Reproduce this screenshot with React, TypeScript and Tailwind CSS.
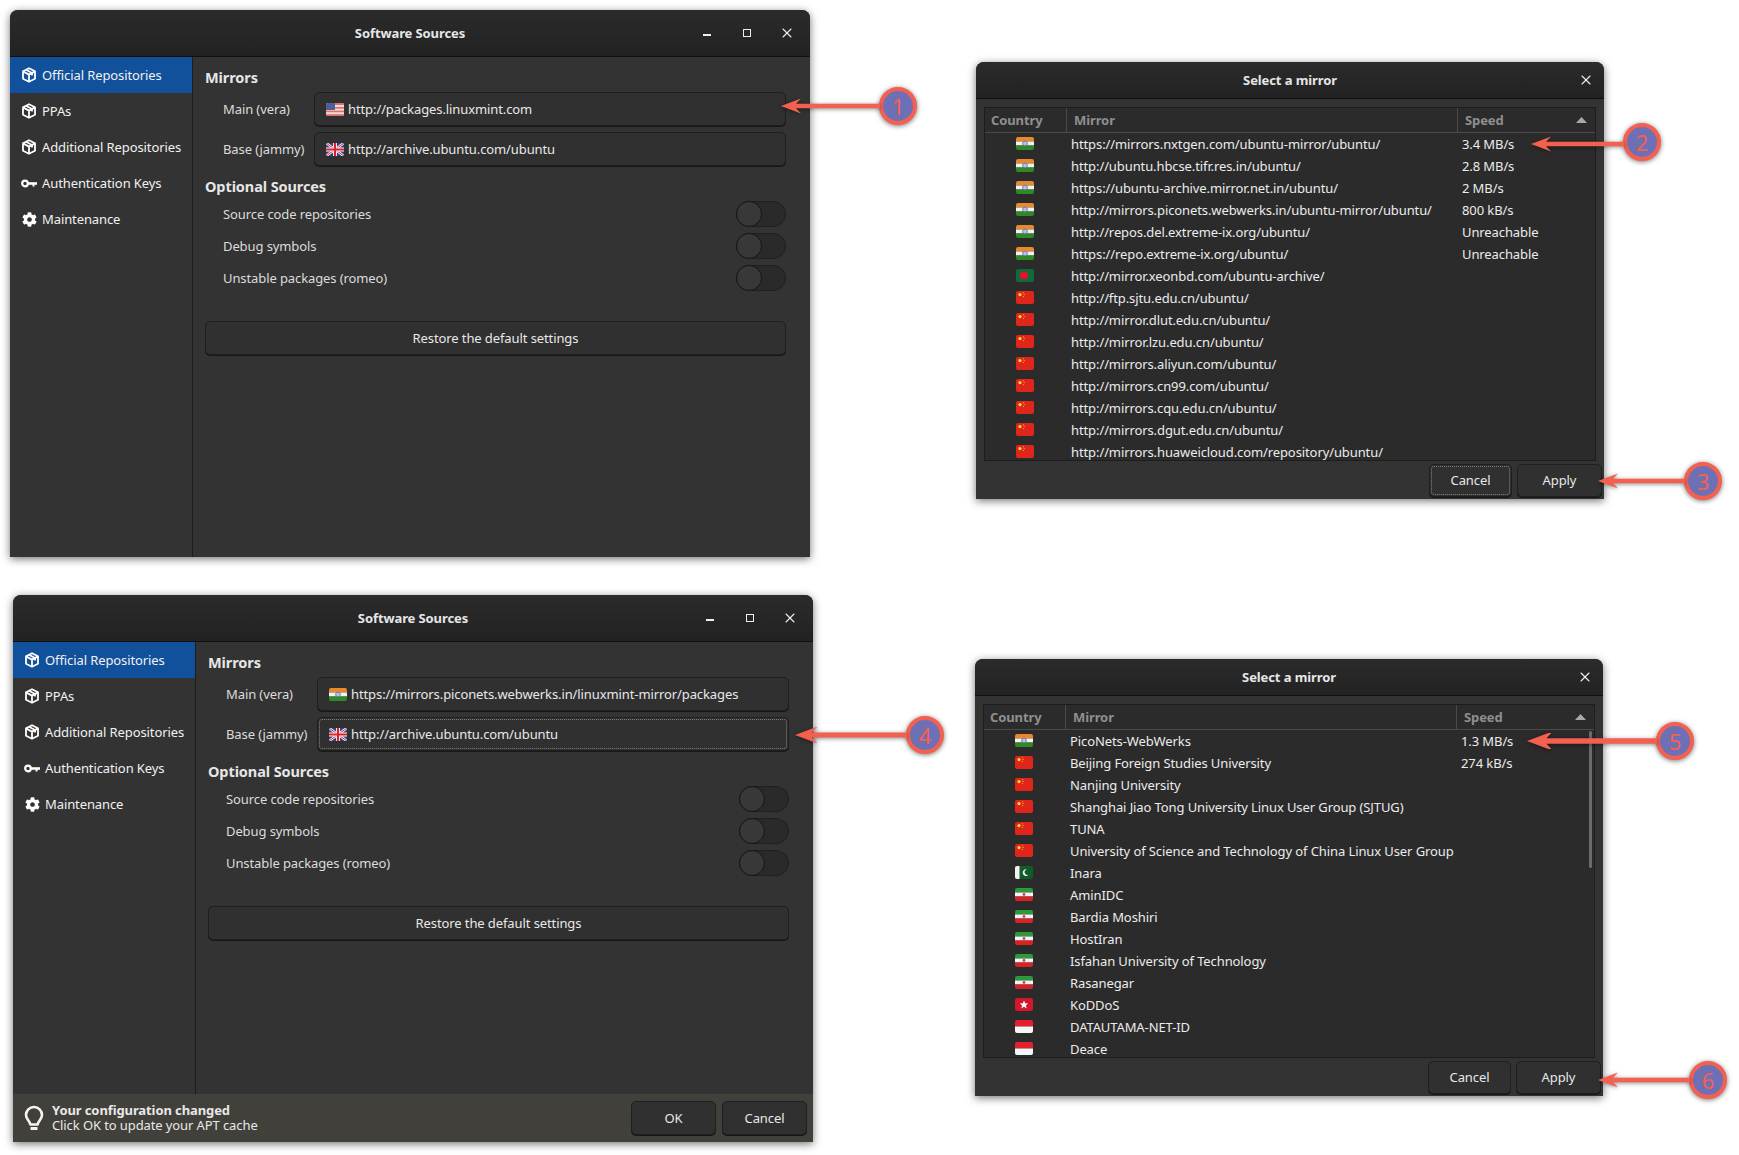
import type { ReactNode } from "react"
import { FaCog } from "react-icons/fa"
import { X } from "lucide-react"

type FlagName = "in" | "bd" | "cn" | "pk" | "ir" | "hk" | "id" | "us" | "gb"

function Flag({ name, className = "" }: { name: FlagName; className?: string }) {
    return (
        <svg viewBox="0 0 18 13" className={`w-[18px] h-[13px] rounded-[2px] shrink-0 ${className}`}>
            {name === "in" && (
                <>
                    <rect width="18" height="4.5" fill="#e88a2c" />
                    <rect y="4.5" width="18" height="4" fill="#f2f2f2" />
                    <rect y="8.5" width="18" height="4.5" fill="#2f8a25" />
                    <circle cx="9" cy="6.5" r="2.4" fill="#b9c4dc" stroke="#5566a8" strokeWidth="0.8" />
                </>
            )}
            {name === "bd" && (
                <>
                    <rect width="18" height="13" fill="#0f6a3c" />
                    <circle cx="8" cy="6.5" r="4" fill="#e5122b" />
                </>
            )}
            {name === "cn" && (
                <>
                    <rect width="18" height="13" fill="#e0261b" />
                    <circle cx="4" cy="3.6" r="1.6" fill="#f6dd3c" />
                    <circle cx="7.4" cy="1.8" r="0.5" fill="#f6dd3c" />
                    <circle cx="8.2" cy="3.6" r="0.5" fill="#f6dd3c" />
                    <circle cx="7.4" cy="5.6" r="0.5" fill="#f6dd3c" />
                </>
            )}
            {name === "pk" && (
                <>
                    <rect width="18" height="13" fill="#0f5c2a" />
                    <rect width="4.5" height="13" fill="#f2f2f2" />
                    <path d="M11.5 3.4a3.3 3.3 0 1 0 2 5.4 2.7 2.7 0 1 1-2-5.4z" fill="#f2f2f2" />
                </>
            )}
            {name === "ir" && (
                <>
                    <rect width="18" height="4.5" fill="#2c9a3c" />
                    <rect y="4.5" width="18" height="4" fill="#f4f4f4" />
                    <rect y="8.5" width="18" height="4.5" fill="#dc2027" />
                    <circle cx="9" cy="6.5" r="1.4" fill="#dc4048" />
                </>
            )}
            {name === "hk" && (
                <>
                    <rect width="18" height="13" fill="#d3162a" />
                    <path d="M9 2.4l1.2 2.8 3 .2-2.3 2 .8 3L9 8.8l-2.7 1.6.8-3-2.3-2 3-.2z" fill="#f6f6f6" />
                </>
            )}
            {name === "id" && (
                <>
                    <rect width="18" height="6.5" fill="#e5202c" />
                    <rect y="6.5" width="18" height="6.5" fill="#f6f6f6" />
                </>
            )}
            {name === "us" && (
                <>
                    <rect width="18" height="13" fill="#f2d9d6" />
                    <rect y="0" width="18" height="2" fill="#d9706e" />
                    <rect y="4" width="18" height="1.6" fill="#d9706e" />
                    <rect y="7.6" width="18" height="1.6" fill="#d9706e" />
                    <rect y="11.2" width="18" height="1.8" fill="#d9706e" />
                    <rect width="9" height="7" fill="#4c5f97" />
                </>
            )}
            {name === "gb" && (
                <>
                    <rect width="18" height="13" fill="#2b3f8f" />
                    <path d="M0 0L18 13M18 0L0 13" stroke="#f4f4f4" strokeWidth="2.6" />
                    <path d="M0 0L18 13M18 0L0 13" stroke="#d8232f" strokeWidth="1" />
                    <path d="M9 0V13M0 6.5H18" stroke="#f4f4f4" strokeWidth="4" />
                    <path d="M9 0V13M0 6.5H18" stroke="#d8232f" strokeWidth="2.2" />
                </>
            )}
        </svg>
    )
}

function PackageIcon() {
    return (
        <svg viewBox="0 0 16 16" className="size-[16px] shrink-0 text-white" fill="none" stroke="currentColor" strokeWidth="1.8" strokeLinejoin="round">
            <path d="M8 1.2 14 4.2v7.6L8 14.8 2 11.8V4.2z" />
            <path d="M2 4.4l6 3.2 6-3.2M8 7.6v7M5 2.8l6 3.2v2.6" />
        </svg>
    )
}

function KeyIcon() {
    return (
        <svg viewBox="0 0 16 9" className="w-[16px] h-[9px] shrink-0 text-white" fill="none" stroke="currentColor">
            <circle cx="4" cy="4.5" r="2.8" strokeWidth="2.2" />
            <path d="M7 4.5h9" strokeWidth="2.6" />
            <path d="M12.5 5v2.5" strokeWidth="2" />
        </svg>
    )
}

function BulbIcon() {
    return (
        <svg viewBox="0 0 20 26" className="w-[20px] h-[26px] shrink-0 text-[#f4f4f4]" fill="none" stroke="currentColor">
            <path d="M10 2a7.9 7.9 0 0 0-8 8c0 4.2 3.6 5.6 4.4 9.5h7.2C14.4 15.6 18 14.2 18 10a7.9 7.9 0 0 0-8-8z" strokeWidth="2.6" strokeLinejoin="round" />
            <path d="M6.5 23.5h7" strokeWidth="3" />
        </svg>
    )
}

function NavItem({ icon, label, active = false }: { icon: ReactNode; label: string; active?: boolean }) {
    return (
        <div className={`h-[36px] flex items-center gap-[5px] pl-[11px] text-[#f1f1f1] ${active ? "bg-[#11509b]" : ""}`}>
            <span className="w-[16px] flex justify-center">{icon}</span>
            <span className="translate-y-px">{label}</span>
        </div>
    )
}

function Switch() {
    return (
        <div className="w-[50px] h-[26px] rounded-full bg-[#2a2a2a] border border-[#1f1f1f]">
            <div className="w-[26px] h-[26px] -m-px rounded-full bg-[#383838] border border-[#161616]" />
        </div>
    )
}

function OptionRow({ label }: { label: string }) {
    return (
        <div className="h-[26px] flex items-center justify-between pl-[18px]">
            <span className="translate-y-px text-[#dcdcdc]">{label}</span>
            <Switch />
        </div>
    )
}

const fieldClass = "rounded-[5px] bg-[#303030] border border-[#1f1f1f] shadow-[0_1px_0_#171717] text-[#e8e8e8]"
const focusClass = "outline-1 outline-dotted outline-[#808080] -outline-offset-3"

function UrlRow({ label, flag, url, focused = false }: { label: string; flag: FlagName; url: string; focused?: boolean }) {
    return (
        <div className="flex items-center pl-[18px]">
            <span className="w-[91px] translate-y-px text-[#dcdcdc]">{label}</span>
            <div className={`flex-1 h-[34px] flex items-center gap-[4px] pl-[11px] ${fieldClass} ${focused ? focusClass : ""}`}>
                <Flag name={flag} />
                <span className="translate-y-px">{url}</span>
            </div>
        </div>
    )
}

function Btn({ children, className = "", focused = false }: { children: ReactNode; className?: string; focused?: boolean }) {
    return (
        <button className={`flex items-center justify-center ${fieldClass} ${focused ? focusClass : ""} ${className}`}>
            <span className="translate-y-px">{children}</span>
        </button>
    )
}

function TitleBar({ title, className, children }: { title: string; className: string; children: ReactNode }) {
    return (
        <div className={`relative shrink-0 flex items-center justify-center rounded-t-[8px] bg-gradient-to-b from-[#2b2b2b] to-[#222222] border-b border-[#101010] font-bold text-[#e6e6e6] ${className}`}>
            <span className="translate-y-px">{title}</span>
            <div className="absolute right-0 inset-y-0 flex items-center">{children}</div>
        </div>
    )
}

function SoftwareSources({
    className,
    mainFlag,
    mainUrl,
    baseFocused = false,
    changed = false,
}: {
    className: string
    mainFlag: FlagName
    mainUrl: string
    baseFocused?: boolean
    changed?: boolean
}) {
    return (
        <div className={`absolute w-[800px] h-[547px] flex flex-col bg-[#333333] rounded-t-[8px] shadow-[0_2px_9px_rgba(0,0,0,0.55)] ${className}`}>
            <TitleBar title="Software Sources" className="h-[47px]">
                <div className="flex items-center pr-[3px]">
                    <div className="w-[40px] flex justify-center">
                        <div className="w-[8px] h-[2px] translate-y-[2px] bg-[#eeeeee]" />
                    </div>
                    <div className="w-[40px] flex justify-center">
                        <div className="size-[8px] border-[1.5px] border-[#eeeeee]" />
                    </div>
                    <div className="w-[40px] flex justify-center">
                        <X className="size-[16px] text-[#eeeeee]" strokeWidth={1.6} />
                    </div>
                </div>
            </TitleBar>
            <div className="flex-1 flex min-h-0">
                <div className="w-[183px] shrink-0 border-r border-[#1d1d1d]">
                    <NavItem icon={<PackageIcon />} label="Official Repositories" active />
                    <NavItem icon={<PackageIcon />} label="PPAs" />
                    <NavItem icon={<PackageIcon />} label="Additional Repositories" />
                    <NavItem icon={<KeyIcon />} label="Authentication Keys" />
                    <NavItem icon={<FaCog className="size-[15px] text-white" />} label="Maintenance" />
                </div>
                <div className="flex-1 pl-[12px] pr-[24px] pt-[10px]">
                    <h2 className="h-[21px] flex items-center font-bold text-[#e6e6e6] text-[14.5px]">Mirrors</h2>
                    <div className="mt-[4px] flex flex-col gap-[6px]">
                        <UrlRow label="Main (vera)" flag={mainFlag} url={mainUrl} />
                        <UrlRow label="Base (jammy)" flag="gb" url="http://archive.ubuntu.com/ubuntu" focused={baseFocused} />
                    </div>
                    <h2 className="mt-[10px] h-[21px] flex items-center font-bold text-[#e6e6e6] text-[14.5px]">Optional Sources</h2>
                    <div className="mt-[4px] flex flex-col gap-[6px]">
                        <OptionRow label="Source code repositories" />
                        <OptionRow label="Debug symbols" />
                        <OptionRow label="Unstable packages (romeo)" />
                    </div>
                    <Btn className="mt-[30px] w-full h-[34px]">Restore the default settings</Btn>
                </div>
            </div>
            {changed && (
                <div className="h-[48px] shrink-0 flex items-center gap-[6px] pl-[11px] pr-[6px] bg-[#41403b]">
                    <BulbIcon />
                    <div className="ml-[2px] flex-1 leading-[15px] text-[#e8e8e8]">
                        <div className="font-bold">Your configuration changed</div>
                        <div>Click OK to update your APT cache</div>
                    </div>
                    <Btn className="w-[85px] h-[34px]">OK</Btn>
                    <Btn className="w-[85px] h-[34px]">Cancel</Btn>
                </div>
            )}
        </div>
    )
}

interface Mirror {
    flag: FlagName
    name: string
    speed?: string
}

function MirrorDialog({
    className,
    mirrors,
    scrollbar = false,
    cancelFocused = false,
}: {
    className: string
    mirrors: Mirror[]
    scrollbar?: boolean
    cancelFocused?: boolean
}) {
    return (
        <div className={`absolute w-[628px] h-[437px] flex flex-col bg-[#333333] rounded-t-[8px] shadow-[0_2px_9px_rgba(0,0,0,0.55)] ${className}`}>
            <TitleBar title="Select a mirror" className="h-[37px]">
                <X className="size-[16px] mr-[10px] text-[#eeeeee]" strokeWidth={1.6} />
            </TitleBar>
            <div className="relative mx-[8px] mt-[8px] h-[354px] flex flex-col overflow-hidden bg-[#2b2b2b] border border-[#1d1d1d]">
                <div className="h-[25px] shrink-0 flex items-center border-b border-[#4a4a4a] font-bold text-[#8f8f8f]">
                    <div className="w-[82px] pl-[6px] h-full flex items-center border-r border-[#4a4a4a]"><span className="translate-y-px">Country</span></div>
                    <div className="w-[391px] pl-[7px] h-full flex items-center border-r border-[#4a4a4a]"><span className="translate-y-px">Mirror</span></div>
                    <div className="flex-1 pl-[7px] pr-[8px] flex items-center justify-between">
                        <span className="translate-y-px">Speed</span>
                        <svg viewBox="0 0 11 6" className="w-[11px] h-[6px]">
                            <path d="M5.5 0 11 6H0z" fill="#a8a8a8" />
                        </svg>
                    </div>
                </div>
                {mirrors.map(mirror => (
                    <div key={mirror.name} className="h-[22px] shrink-0 flex items-center text-[#ececec] first:mt-px">
                        <div className="w-[82px] pr-[2px] flex justify-center -translate-y-px"><Flag name={mirror.flag} /></div>
                        <div className="w-[391px] pl-[4px] translate-y-px whitespace-nowrap">{mirror.name}</div>
                        <div className="flex-1 pl-[4px] translate-y-px">{mirror.speed}</div>
                    </div>
                ))}
                {scrollbar && <div className="absolute right-[2px] top-[26px] w-[3px] h-[137px] rounded-full bg-[#6c6c6c]" />}
            </div>
            <div className="flex-1 flex items-center justify-end gap-[5px] pr-[2px]">
                <Btn className="w-[83px] h-[33px]" focused={cancelFocused}>Cancel</Btn>
                <Btn className="w-[85px] h-[33px]">Apply</Btn>
            </div>
        </div>
    )
}

function Callout({ n, className, arrowClass = "" }: { n: number; className: string; arrowClass?: string }) {
    return (
        <div className={`absolute h-[38px] flex items-center ${className}`}>
            <svg viewBox="0 0 100 16" preserveAspectRatio="xMinYMid slice" className={`flex-1 h-[16px] min-w-0 -mr-[1px] drop-shadow-[0_1px_2px_rgba(0,0,0,0.45)] ${arrowClass}`}>
                <path d="M0 8 20 .5 15 5.8H400V10.2H15L20 15.5z" fill="#f4604f" />
            </svg>
            <div className="size-[38px] shrink-0 flex items-center justify-center rounded-full border-[4px] border-[#f4604f] bg-[#6e70b6] text-[#f4604f] text-[22px] shadow-[0_1px_5px_rgba(0,0,0,0.55)]">
                {n}
            </div>
        </div>
    )
}

const firstMirrors: Mirror[] = [
    { flag: "in", name: "https://mirrors.nxtgen.com/ubuntu-mirror/ubuntu/", speed: "3.4 MB/s" },
    { flag: "in", name: "http://ubuntu.hbcse.tifr.res.in/ubuntu/", speed: "2.8 MB/s" },
    { flag: "in", name: "https://ubuntu-archive.mirror.net.in/ubuntu/", speed: "2 MB/s" },
    { flag: "in", name: "http://mirrors.piconets.webwerks.in/ubuntu-mirror/ubuntu/", speed: "800 kB/s" },
    { flag: "in", name: "http://repos.del.extreme-ix.org/ubuntu/", speed: "Unreachable" },
    { flag: "in", name: "https://repo.extreme-ix.org/ubuntu/", speed: "Unreachable" },
    { flag: "bd", name: "http://mirror.xeonbd.com/ubuntu-archive/" },
    { flag: "cn", name: "http://ftp.sjtu.edu.cn/ubuntu/" },
    { flag: "cn", name: "http://mirror.dlut.edu.cn/ubuntu/" },
    { flag: "cn", name: "http://mirror.lzu.edu.cn/ubuntu/" },
    { flag: "cn", name: "http://mirrors.aliyun.com/ubuntu/" },
    { flag: "cn", name: "http://mirrors.cn99.com/ubuntu/" },
    { flag: "cn", name: "http://mirrors.cqu.edu.cn/ubuntu/" },
    { flag: "cn", name: "http://mirrors.dgut.edu.cn/ubuntu/" },
    { flag: "cn", name: "http://mirrors.huaweicloud.com/repository/ubuntu/" },
]

const secondMirrors: Mirror[] = [
    { flag: "in", name: "PicoNets-WebWerks", speed: "1.3 MB/s" },
    { flag: "cn", name: "Beijing Foreign Studies University", speed: "274 kB/s" },
    { flag: "cn", name: "Nanjing University" },
    { flag: "cn", name: "Shanghai Jiao Tong University Linux User Group (SJTUG)" },
    { flag: "cn", name: "TUNA" },
    { flag: "cn", name: "University of Science and Technology of China Linux User Group" },
    { flag: "pk", name: "Inara" },
    { flag: "ir", name: "AminIDC" },
    { flag: "ir", name: "Bardia Moshiri" },
    { flag: "ir", name: "HostIran" },
    { flag: "ir", name: "Isfahan University of Technology" },
    { flag: "ir", name: "Rasanegar" },
    { flag: "hk", name: "KoDDoS" },
    { flag: "id", name: "DATAUTAMA-NET-ID" },
    { flag: "id", name: "Deace" },
]

export default function App() {
    return (
        <div className="relative w-[1739px] h-[1155px] overflow-hidden bg-white text-[13px] tracking-[-0.1px] font-['Noto_Sans',sans-serif]">
            <SoftwareSources className="left-[10px] top-[10px]" mainFlag="us" mainUrl="http://packages.linuxmint.com" />
            <SoftwareSources
                className="left-[13px] top-[595px]"
                mainFlag="in"
                mainUrl="https://mirrors.piconets.webwerks.in/linuxmint-mirror/packages"
                baseFocused
                changed
            />
            <MirrorDialog className="left-[976px] top-[62px]" mirrors={firstMirrors} cancelFocused />
            <MirrorDialog className="left-[975px] top-[659px]" mirrors={secondMirrors} scrollbar />

            <Callout n={1} className="left-[781px] top-[87px] w-[136px]" />
            <Callout n={2} className="left-[1531px] top-[123px] w-[130px]" arrowClass="translate-y-[2px]" />
            <Callout n={3} className="left-[1598px] top-[462px] w-[124px]" />
            <Callout n={4} className="left-[795px] top-[716px] w-[149px]" />
            <Callout n={5} className="left-[1527px] top-[722px] w-[167px]" />
            <Callout n={6} className="left-[1598px] top-[1061px] w-[129px]" />
        </div>
    )
}
